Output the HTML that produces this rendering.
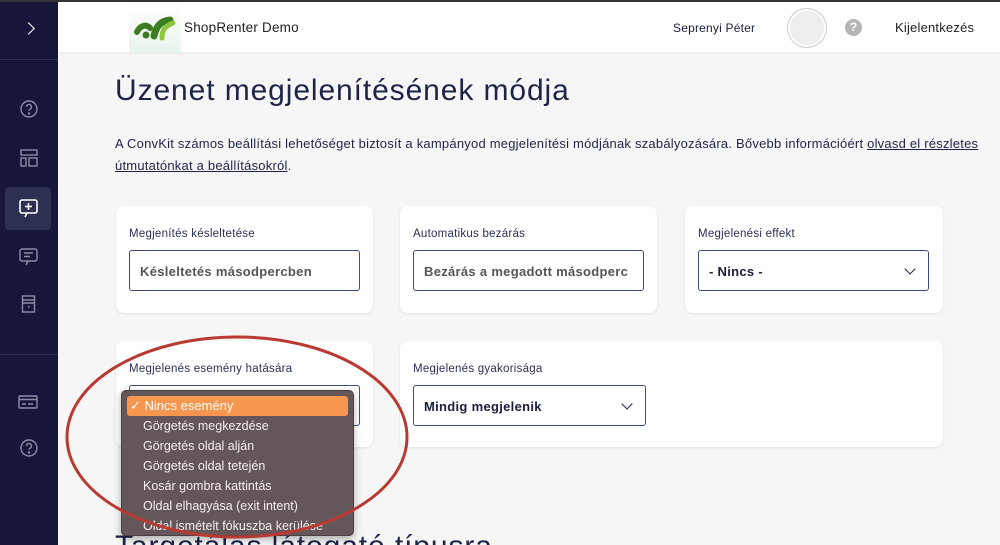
<!DOCTYPE html>
<html><head><meta charset="utf-8"><style>
*{margin:0;padding:0;box-sizing:border-box}
html,body{width:1000px;height:545px;overflow:hidden}
body{background:#f6f6f6;font-family:"Liberation Sans",sans-serif;color:#1f2348;position:relative}
.side{position:absolute;left:0;top:0;width:58px;height:545px;background:#15163a;border-top:2px solid #333}
.side .ln{position:absolute;left:0;width:58px;height:1px;background:#2e3056}
.top{position:absolute;left:58px;top:0;right:0;height:52px;background:#fff;border-top:2px solid #333;box-shadow:0 1px 3px rgba(0,0,0,.06)}
.card{position:absolute;background:#fff;border-radius:8px;box-shadow:0 1px 3px rgba(0,0,0,.08)}
.lbl{position:absolute;left:13px;top:22px;font-size:11.5px;letter-spacing:.25px;color:#2b2f55}
.inp{position:absolute;left:13px;top:44px;width:231px;height:41px;border:1px solid #3b4d80;border-radius:3px;font-size:13px;font-weight:bold;letter-spacing:.3px;padding:13px 10px;color:#555;white-space:nowrap;overflow:hidden}
.sel{color:#1a1d3d}
.chev{position:absolute;right:14px;top:14px;width:8px;height:8px;border-right:1.6px solid #1a1d3d;border-bottom:1.6px solid #1a1d3d;transform:rotate(45deg)}
.dd{position:absolute;left:121px;top:390px;width:233px;height:146px;background:#645759;border-radius:5px;border:1px solid #4a4042;box-shadow:0 3px 8px rgba(0,0,0,.3);padding-top:5px;overflow:hidden}
.dd div{height:20px;line-height:20px;font-size:12.5px;color:#f2eeee;padding-left:21px}
.dd .on{background:#f6964f;margin:0 5px;border-radius:3px;padding-left:3px;color:#fff;font-size:13px}
</style></head><body>
<div class="side">
 <div style="position:absolute;left:24px;top:22px;width:9px;height:9px;border-right:1.6px solid #fff;border-top:1.6px solid #fff;transform:rotate(45deg)"></div>
 <div class="ln" style="top:57px"></div>
 <svg style="position:absolute;left:19px;top:97px" width="20" height="20" viewBox="0 0 20 20" fill="none" stroke="#8a8ca8" stroke-width="1.4"><circle cx="10" cy="10" r="8"/><path d="M7.5 8a2.5 2.5 0 1 1 3.5 2.2c-.7.4-1 .8-1 1.6"/><circle cx="10" cy="14.5" r=".5" fill="#8a8ca8"/></svg>
 <svg style="position:absolute;left:20px;top:147px" width="18" height="18" viewBox="0 0 18 18" fill="none" stroke="#8a8ca8" stroke-width="1.4"><rect x="1" y="1" width="16" height="5"/><rect x="1" y="9" width="5" height="8"/><rect x="9" y="9" width="8" height="8"/></svg>
 <div style="position:absolute;left:5px;top:185px;width:46px;height:43px;background:#2e3052;border-radius:4px"></div>
 <svg style="position:absolute;left:18px;top:196px" width="22" height="22" viewBox="0 0 22 22" fill="none" stroke="#fff" stroke-width="1.6"><rect x="2" y="2" width="17" height="13" rx="2"/><path d="M10.5 5v7M7 8.5h7M9 15l-2 4"/></svg>
 <svg style="position:absolute;left:19px;top:246px" width="20" height="18" viewBox="0 0 20 18" fill="none" stroke="#8a8ca8" stroke-width="1.4"><rect x="1" y="1" width="17" height="12" rx="2"/><path d="M5 5h9M5 8.5h6M9 13l-2 4"/></svg>
 <svg style="position:absolute;left:21px;top:293px" width="16" height="18" viewBox="0 0 16 18" fill="none" stroke="#8a8ca8" stroke-width="1.4"><rect x="1.5" y="1" width="12" height="16"/><path d="M1.5 5h12M1.5 8h12M7 12h1.5"/></svg>
 <div class="ln" style="top:352px"></div>
 <svg style="position:absolute;left:18px;top:393px" width="20" height="14" viewBox="0 0 20 14" fill="none" stroke="#8a8ca8" stroke-width="1.4"><rect x="1" y="1" width="18" height="12" rx="1"/><path d="M1 4.5h18M4 9h4M10 9h5"/></svg>
 <svg style="position:absolute;left:19px;top:436px" width="20" height="20" viewBox="0 0 20 20" fill="none" stroke="#8a8ca8" stroke-width="1.4"><circle cx="10" cy="10" r="8"/><path d="M7.5 8a2.5 2.5 0 1 1 3.5 2.2c-.7.4-1 .8-1 1.6"/><circle cx="10" cy="14.5" r=".5" fill="#8a8ca8"/></svg>
</div>
<div class="top">
 <div style="position:absolute;left:71px;top:2px;width:52px;height:50px;background:linear-gradient(#fff,#e8f3ea)"></div>
 <svg style="position:absolute;left:74px;top:12px" width="46" height="28" viewBox="0 0 46 28"><path d="M5 18c3-7 10-8 13-4" fill="none" stroke="#3d7d22" stroke-width="6" stroke-linecap="round"/><circle cx="14" cy="21" r="3.5" fill="#3d7d22"/><path d="M22 22c2-10 7-15 16-16" fill="none" stroke="#3d7d22" stroke-width="7" stroke-linecap="round"/><path d="M30 24c0-8 3-12 11-15" fill="none" stroke="#8cc63f" stroke-width="5" stroke-linecap="round"/></svg>
 <div style="position:absolute;left:126px;top:18px;font-size:13.5px;letter-spacing:.2px;color:#222">ShopRenter Demo</div>
 <div style="position:absolute;left:615px;top:19px;font-size:12px;letter-spacing:.2px;color:#1a1d3d">Seprenyi Péter</div>
 <div style="position:absolute;left:729px;top:6px;width:40px;height:40px;border-radius:50%;border:1.5px solid #ccc;background:#eee;box-shadow:inset 0 0 0 2px #fff"></div>
 <div style="position:absolute;left:787px;top:17px;width:17px;height:17px;border-radius:50%;background:#b5b5b5;color:#fff;font-size:12px;font-weight:bold;text-align:center;line-height:17px">?</div>
 <div style="position:absolute;left:837px;top:18px;font-size:13px;letter-spacing:.2px;color:#222">Kijelentkezés</div>
</div>
<div style="position:absolute;left:115px;top:74px;font-size:30px;letter-spacing:.9px;color:#1f2348;white-space:nowrap">Üzenet megjelenítésének módja</div>
<div style="position:absolute;left:115px;top:133px;width:880px;font-size:13px;letter-spacing:.22px;line-height:22px;color:#1f2348">A ConvKit számos beállítási lehetőséget biztosít a kampányod megjelenítési módjának szabályozására. Bővebb információért <u>olvasd el részletes útmutatónkat a beállításokról</u>.</div>
<div class="card" style="left:116px;top:206px;width:257px;height:107px"><div class="lbl">Megjenítés késleltetése</div><div class="inp">Késleltetés másodpercben</div></div>
<div class="card" style="left:400px;top:206px;width:257px;height:107px"><div class="lbl">Automatikus bezárás</div><div class="inp">Bezárás a megadott másodperc</div></div>
<div class="card" style="left:685px;top:206px;width:258px;height:107px"><div class="lbl">Megjelenési effekt</div><div class="inp sel">- Nincs -<span class="chev"></span></div></div>
<div class="card" style="left:116px;top:341px;width:257px;height:106px"><div class="lbl">Megjelenés esemény hatására</div><div class="inp sel"></div></div>
<div class="card" style="left:400px;top:341px;width:543px;height:106px"><div class="lbl">Megjelenés gyakorisága</div><div class="inp sel" style="width:233px">Mindig megjelenik<span class="chev"></span></div></div>
<div style="position:absolute;left:115px;top:530px;font-size:30px;letter-spacing:.9px;color:#1f2348;white-space:nowrap">Targetálás látogató típusra</div>
<div class="dd">
 <div class="on">✓ Nincs esemény</div>
 <div>Görgetés megkezdése</div><div>Görgetés oldal alján</div><div>Görgetés oldal tetején</div><div>Kosár gombra kattintás</div><div>Oldal elhagyása (exit intent)</div><div>Oldal ismételt fókuszba kerülése</div>
</div>
<svg style="position:absolute;left:0;top:0" width="1000" height="545"><ellipse cx="237" cy="437" rx="170" ry="100" fill="none" stroke="#b83a32" stroke-width="3"/></svg>
</body></html>
